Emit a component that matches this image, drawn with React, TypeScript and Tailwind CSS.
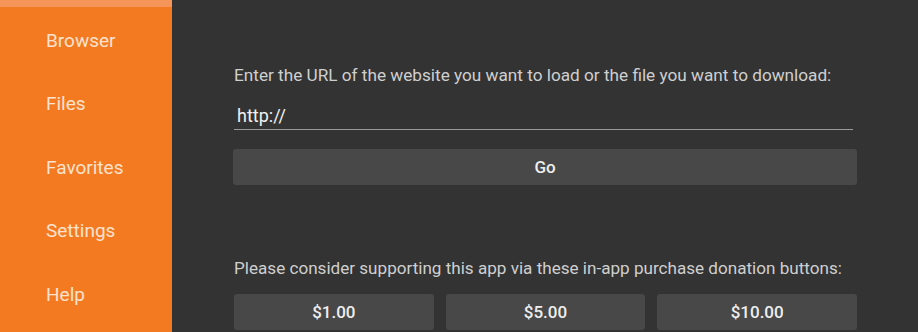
import React from "react";

export default function App() {
  const items = ["Browser", "Files", "Favorites", "Settings", "Help"];
  return (
    <div
      className="flex h-[332px] w-[918px] overflow-hidden bg-[#333333]"
      style={{ fontFamily: "Roboto, 'Noto Sans', sans-serif" }}
    >
      <aside className="flex w-[172px] shrink-0 flex-col bg-[#f47a21]">
        <div className="h-[7px] bg-[#f6955a]" />
        <div className="flex flex-col pt-[2px]">
          {items.map((it) => (
            <div
              key={it}
              className="flex h-[63.5px] items-center pl-[46px] text-[19px] text-[#fde3cf]"
            >
              {it}
            </div>
          ))}
        </div>
      </aside>
      <main className="flex flex-1 flex-col px-[61px] pt-[63px]">
        <p className="pl-px text-[17.2px] leading-[24px] text-[#cfcfcf]">
          Enter the URL of the website you want to load or the file you want to download:
        </p>
        <div className="mt-[19px] mr-[4px] ml-[1px] border-b border-[#9a9a9a] pb-[3px] pl-[3px] text-[18px] leading-[20px] text-[#f0f0f0]">
          http://
        </div>
        <button className="mt-[19px] h-[36px] w-full rounded-[3px] bg-[#484848] pt-[2px] text-[17px] font-medium text-[#eeeeee]">
          Go
        </button>
        <p className="mt-[71px] pl-px text-[17.1px] leading-[24px] text-[#cfcfcf]">
          Please consider supporting this app via these in-app purchase donation buttons:
        </p>
        <div className="mt-[14px] ml-px grid grid-cols-3 gap-[12px]">
          {["$1.00", "$5.00", "$10.00"].map((p) => (
            <button
              key={p}
              className="h-[36px] rounded-[3px] bg-[#484848] pt-[2px] text-[17px] font-medium text-[#eeeeee]"
            >
              {p}
            </button>
          ))}
        </div>
      </main>
    </div>
  );
}
